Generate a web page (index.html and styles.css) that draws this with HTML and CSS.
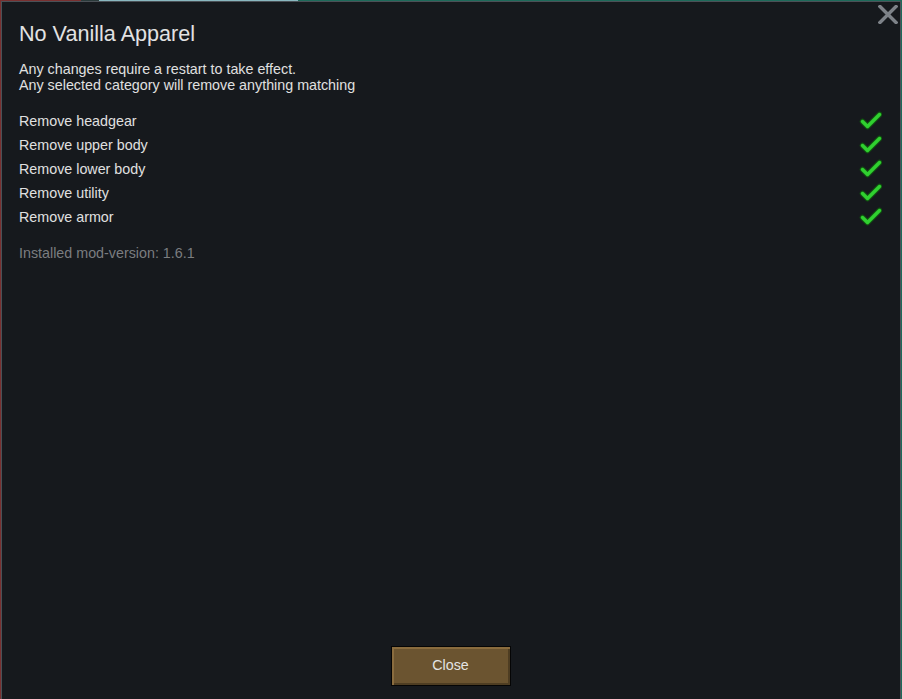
FILE: index.html
```html
<!DOCTYPE html>
<html>
<head>
<meta charset="utf-8">
<link rel="stylesheet" href="styles.css">
</head>
<body>
<div class="window">
  <button class="close-x" aria-label="Close">
    <svg width="20" height="19" viewBox="0 0 20 19"><path d="M2 1.5 L18 17.5 M18 1.5 L2 17.5" stroke="#7d8288" stroke-width="3.4" stroke-linecap="square"/></svg>
  </button>
  <h1 class="title">No Vanilla Apparel</h1>
  <p class="desc">Any changes require a restart to take effect.<br>Any selected category will remove anything matching</p>
  <ul class="options">
    <li class="option"><span>Remove headgear</span><span class="check"></span></li>
    <li class="option"><span>Remove upper body</span><span class="check"></span></li>
    <li class="option"><span>Remove lower body</span><span class="check"></span></li>
    <li class="option"><span>Remove utility</span><span class="check"></span></li>
    <li class="option"><span>Remove armor</span><span class="check"></span></li>
  </ul>
  <p class="version">Installed mod-version: 1.6.1</p>
  <div class="footer">
    <button class="close-btn">Close</button>
  </div>
</div>
</body>
</html>
```
FILE: styles.css
```css
html, body {
  margin: 0;
  padding: 0;
  height: 100%;
  overflow: hidden;
}
body {
  background: linear-gradient(90deg, #7a3030 0 9%, #2a3a3a 9% 11%, #8ab8c0 11% 33%, #1d6a5a 33% 100%);
  font-family: "Liberation Sans", Arial, sans-serif;
  color: #e0e0e0;
}
.window {
  position: relative;
  box-sizing: border-box;
  margin: 1px 0 0 1px;
  width: 900px;
  height: 710px;
  background: #16191d;
  border: 1px solid #4b5157;
  padding: 17px 18px 0 17px;
  display: flex;
  flex-direction: column;
}
.close-x {
  position: absolute;
  top: 3px;
  right: 2px;
  width: 20px;
  height: 19px;
  padding: 0;
  border: 0;
  background: none;
  display: block;
}
.close-x svg { display: block; }
.title {
  margin: 0;
  font-size: 21.6px;
  font-weight: normal;
  line-height: 30px;
  color: #e2e2e2;
}
.desc {
  margin: 12px 0 0 0;
  font-size: 14.3px;
  line-height: 16px;
  color: #e0e0e0;
}
.options {
  list-style: none;
  margin: 16px 0 0 0;
  padding: 0;
}
.option {
  display: flex;
  justify-content: space-between;
  align-items: center;
  height: 24px;
  font-size: 14.3px;
  color: #e0e0e0;
}
.check {
  width: 24px;
  height: 20px;
  background:
    url("data:image/svg+xml,%3Csvg xmlns='http://www.w3.org/2000/svg' width='24' height='20' viewBox='0 0 24 20'%3E%3Cpath d='M4.5 10.5 L9.5 15.5 L21.5 3.5' fill='none' stroke='%23115511' stroke-width='5.5' stroke-linecap='round' stroke-linejoin='round'/%3E%3Cpath d='M4.5 10.5 L9.5 15.5 L21.5 3.5' fill='none' stroke='%2330d030' stroke-width='3.4' stroke-linecap='round' stroke-linejoin='round'/%3E%3C/svg%3E") no-repeat;
}
.version {
  margin: 16px 0 0 0;
  font-size: 14.3px;
  line-height: 16px;
  color: #7b7d80;
}
.footer {
  margin-top: auto;
  display: flex;
  justify-content: center;
  padding-bottom: 24px;
}
.close-btn {
  width: 120px;
  height: 40px;
  border: 1px solid #050505;
  background: #6b5430;
  box-shadow: inset 2px 2px 0 #8a6c3e, inset -2px -2px 0 #4e3d22;
  font-family: "Liberation Sans", Arial, sans-serif;
  font-size: 14.3px;
  color: #e4e4e4;
  padding: 0 0 2px 0;
}
```
